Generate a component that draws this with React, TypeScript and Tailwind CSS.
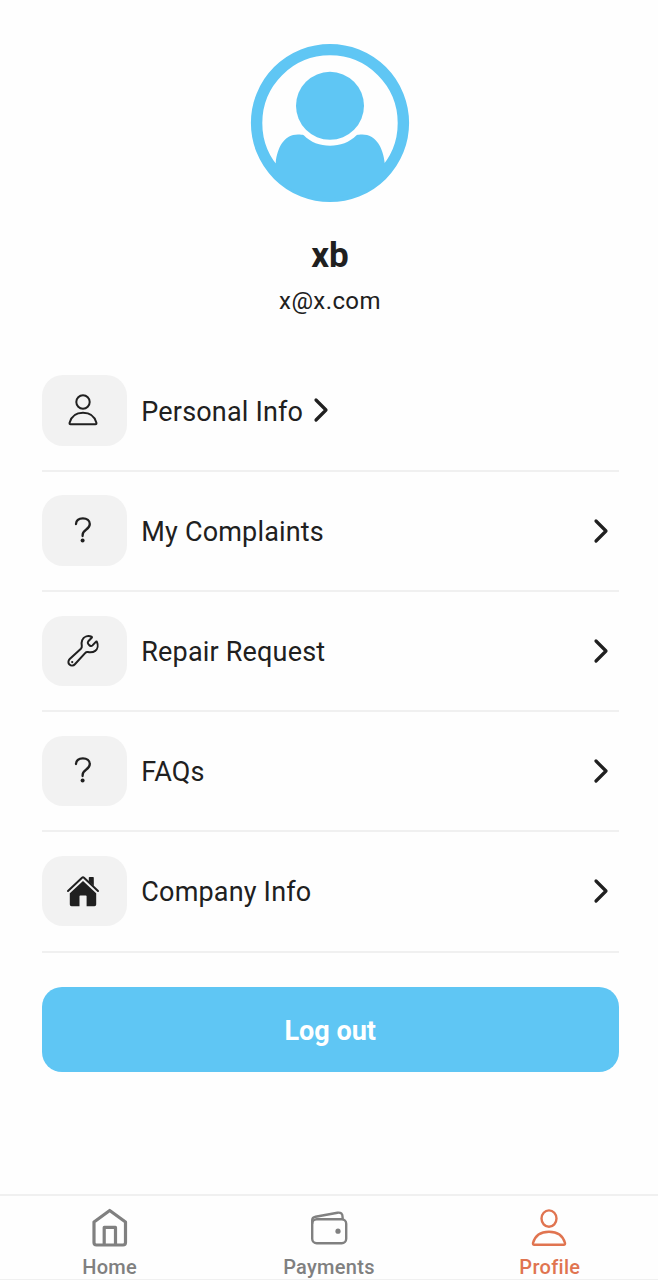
import type { ReactNode } from "react";

function Avatar() {
  return (
    <svg className="size-40" viewBox="250 43 160 160" fill="#5fc6f4">
      <circle cx="330" cy="123" r="73.4" fill="none" stroke="#5fc6f4" strokeWidth="11.4" />
      <circle cx="330" cy="105.8" r="34" />
      <path d="M275.7 163C277.2 148 284 134.6 298 134.6C300.500 134.600 302.200 134.800 303.800 135.200C317 149.200 343 149.200 356.500 135.200C358 134.800 359.700 134.600 362.200 134.600C376 134.600 383.200 148 384.700 163L391 171C366 206 294 206 269 171Z" />
    </svg>
  );
}

function PersonIcon({ thick = false }: { thick?: boolean }) {
  return thick ? (
    <svg className="h-10 w-10" viewBox="0 0 40 40" fill="none" stroke="currentColor" strokeWidth="2.4" strokeLinejoin="round">
      <ellipse cx="19" cy="11.600" rx="7.500" ry="8.200" />
      <path d="M4.200 37.700H33.800Q35.300 37.700 35 36C32.800 28 26.200 24.700 19 24.700S5.200 28 3 36Q2.700 37.700 4.200 37.700Z" />
    </svg>
  ) : (
    <svg className="size-9" viewBox="0 0 36 36" fill="none" stroke="currentColor" strokeWidth="2" strokeLinejoin="round">
      <circle cx="18" cy="10" r="6.700" />
      <path d="M5.500 32.200H30.500Q31.700 32.200 31.400 30.800C29.500 23.800 24 20.800 18 20.800S6.500 23.800 4.600 30.800Q4.300 32.200 5.500 32.200Z" />
    </svg>
  );
}

function QuestionIcon() {
  return (
    <svg className="size-9" viewBox="0 0 36 36" fill="none" stroke="currentColor" strokeWidth="2.300" strokeLinecap="round" strokeLinejoin="round">
      <path d="M11 11C11.200 7.300 14 5.300 17.900 5.300C21.900 5.300 24.800 7.600 24.800 11C24.800 13.700 23.300 15.200 21 16.800C18.500 18.500 17.600 19.700 17.600 22.300V23" />
      <circle cx="17.600" cy="27.600" r="2" fill="currentColor" stroke="none" />
    </svg>
  );
}

function WrenchIcon() {
  return (
    <svg className="size-9" viewBox="0 0 36 36" fill="none" stroke="currentColor" strokeWidth="2" strokeLinecap="round" strokeLinejoin="round">
      <path d="M26.200 3.500C22.500 2.400 18.700 3.800 17.200 7.100C16.400 9 16.500 11 16.800 12.900C17 14.200 16.700 14.900 15.900 15.700L4.700 26C3 27.700 3 30.200 4.500 31.600C6 33 8.400 32.900 9.900 31.300L20.100 20.100C20.900 19.200 21.700 18.900 22.900 19.100C25.400 19.500 28.200 19.400 30.200 17.900C32.800 16 33.300 12.100 32 9.100C31.700 8.500 31.200 8.400 30.800 8.900L27.500 12.400C26.600 13.300 25.500 13.200 24.500 12.400C22.800 11 22.300 9.400 23.300 8.300L26.700 4.800C27.200 4.300 27 3.700 26.200 3.500Z" />
      <circle cx="7.200" cy="29.100" r="1.100" fill="currentColor" stroke="none" />
    </svg>
  );
}

function HouseFilledIcon() {
  return (
    <svg className="size-9" viewBox="0 0 36 36" fill="currentColor">
      <path d="M4.800 20.200L18 8L31.200 20.200V31.500Q31.200 33.300 29.400 33.300H21.600V23.300Q21.600 22.500 20.800 22.500H15.300Q14.500 22.500 14.500 23.300V33.300H6.600Q4.800 33.300 4.800 31.500Z" />
      <path d="M23.800 4.700Q23.800 4 24.600 4H28Q28.800 4 28.800 4.700V13L23.800 8.500Z" />
      <path d="M3 18L17 4.700Q18 3.800 19 4.700L33 18" fill="none" stroke="currentColor" strokeWidth="2" strokeLinecap="round" />
    </svg>
  );
}

function Chevron() {
  return (
    <svg className="h-7 w-5 shrink-0" viewBox="0 0 20 28" fill="none" stroke="currentColor" strokeWidth="3.200" strokeLinecap="round" strokeLinejoin="round">
      <path d="M5 4L15 14L5 24" />
    </svg>
  );
}

function HomeIcon() {
  return (
    <svg className="size-10" viewBox="0 0 40 40" fill="none" stroke="currentColor" strokeWidth="3.200" strokeLinejoin="round">
      <path d="M19.700 3.500L4 15V35.500Q4 38 6.500 38H33Q35.500 38 35.500 35.500V15Z" />
      <path d="M14.200 38V20.400H25.500V38" />
    </svg>
  );
}

function WalletIcon() {
  return (
    <svg className="size-10" viewBox="0 0 40 40" fill="none" stroke="currentColor" strokeWidth="2.400" strokeLinejoin="round">
      <rect x="3.200" y="12.200" width="34" height="24" rx="4.500" />
      <path d="M3.200 16.700V13.200Q3.200 10.400 6.500 9.700L28.500 5.700Q33.600 5 33.600 10.200V12.200" />
      <circle cx="29" cy="24.200" r="2.600" fill="currentColor" stroke="none" />
    </svg>
  );
}

type Item = { label: string; icon: ReactNode; inline?: boolean };

const items: Item[] = [
  { label: "Personal Info", icon: <PersonIcon />, inline: true },
  { label: "My Complaints", icon: <QuestionIcon /> },
  { label: "Repair Request", icon: <WrenchIcon /> },
  { label: "FAQs", icon: <QuestionIcon /> },
  { label: "Company Info", icon: <HouseFilledIcon /> },
];

function MenuRow({ label, icon, inline }: Item) {
  return (
    <li className="flex h-[120.2px] items-start border-b-2 border-[#f0f0f0] pt-[23.500px]">
      <div className="flex h-[70.500px] w-full items-center">
        <span className="flex h-full w-[85.500px] shrink-0 items-center justify-center rounded-[21px] bg-[#f2f2f2] pr-[2px]">{icon}</span>
        <span className="ml-[14.300px] pt-[2.400px] text-[27px] leading-8 tracking-[0.18px] whitespace-nowrap">{label}</span>
        <span className={inline ? "ml-[7.500px]" : "mr-[8px] ml-auto"}>
          <Chevron />
        </span>
      </div>
    </li>
  );
}

function Tab({ label, icon, active }: { label: string; icon: ReactNode; active?: boolean }) {
  return (
    <a className={`flex flex-col items-center pt-[11px] ${active ? "pl-[3px] text-[#e07450]" : "text-[#808080]"}`}>
      {icon}
      <span className="mt-[8px] text-[20px] leading-6 font-medium tracking-[0.3px]">{label}</span>
    </a>
  );
}

export default function App() {
  return (
    <div className="flex h-[1280px] w-[658px] flex-col overflow-hidden bg-[#fefefe] font-['Roboto',sans-serif] text-[#202020]">
      <header className="flex flex-col items-center pt-[43px] pl-[2px]">
        <Avatar />
        <h1 className="mt-[33px] text-[35px] leading-10 font-bold">xb</h1>
        <p className="mt-[9px] text-[24px] leading-8 tracking-[0.4px]">x@x.com</p>
      </header>
      <main className="mt-[34.700px] flex-1 pr-[39px] pl-[41.500px]">
        <ul>
          {items.map((item) => (
            <MenuRow key={item.label} {...item} />
          ))}
        </ul>
        <button className="mt-[34.300px] block h-[85px] w-full rounded-[20px] bg-[#5fc6f4] pt-[3px] text-[27px] leading-8 font-bold text-white">Log out</button>
      </main>
      <nav className="grid h-[86px] shrink-0 grid-cols-3 border-t-2 border-b border-[#f0f0f0]">
        <Tab label="Home" icon={<HomeIcon />} />
        <Tab label="Payments" icon={<WalletIcon />} />
        <Tab label="Profile" icon={<PersonIcon thick />} active />
      </nav>
    </div>
  );
}
